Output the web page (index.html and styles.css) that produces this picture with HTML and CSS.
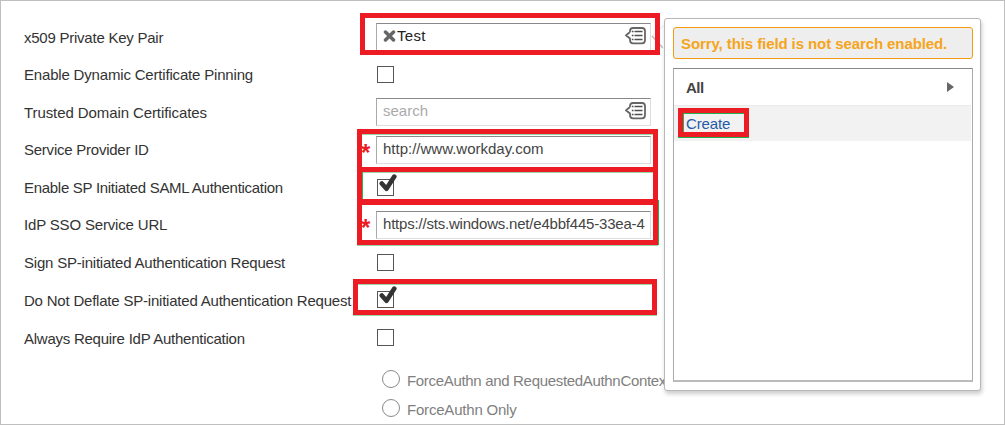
FILE: index.html
```
<!DOCTYPE html>
<html lang="en">
<head>
<meta charset="utf-8">
<title>SAML Setup</title>
<link rel="stylesheet" href="styles.css">
</head>
<body>
<svg class="defs" width="0" height="0">
  <symbol id="prompt" viewBox="0 0 21 18">
    <path d="M5 5V4Q5 1 8 1H17Q20 1 20 4V13Q20 16.300 17 16.300H8Q5 16.300 5 13V11.500L1 8.300L5 5" fill="#fff" stroke="#666" stroke-width="1.800"/>
    <path d="M9.500 4.500H17.500M9.500 8.500H17.500M9.500 12.500H17.500" stroke="#505050" stroke-width="1.500"/>
    <path d="M6.800 4.500H8.500M6.800 8.500H8.500M6.800 12.500H8.500" stroke="#505050" stroke-width="1.500"/>
  </symbol>
  <symbol id="check" viewBox="0 0 18 18">
    <path d="M2.800 9.500L7.500 14.800L15.300 2.600" fill="none" stroke="#333" stroke-width="4.600" stroke-linecap="round" stroke-linejoin="round"/>
  </symbol>
</svg>
<main class="page">
  <div class="form">
    <div class="row"><span class="label low l1">x509 Private Key Pair</span><div class="field"><svg class="remove" viewBox="0 0 13 12"><path d="M2.500 2L10.500 10M10.500 2L2.500 10" stroke="#666" stroke-width="3.500" stroke-linecap="round"/></svg><span class="value dark v1">Test</span><svg class="prompt"><use href="#prompt"/></svg></div></div>
    <div class="row"><span class="label l2">Enable Dynamic Certificate Pinning</span><span class="checkbox"></span></div>
    <div class="row"><span class="label low l3">Trusted Domain Certificates</span><div class="field"><span class="value hint">search</span><svg class="prompt"><use href="#prompt"/></svg></div></div>
    <div class="row"><span class="label l4">Service Provider ID</span><div class="field"><span class="star">*</span><span class="value">http://www.workday.com</span></div></div>
    <div class="row"><span class="label l5">Enable SP Initiated SAML Authentication</span><span class="checkbox"><svg class="check"><use href="#check"/></svg></span></div>
    <div class="row"><span class="label l6">IdP SSO Service URL</span><div class="field"><span class="star">*</span><span class="value v4">https://sts.windows.net/e4bbf445-33ea-4</span></div></div>
    <div class="row"><span class="label l7">Sign SP-initiated Authentication Request</span><span class="checkbox"></span></div>
    <div class="row"><span class="label low l8">Do Not Deflate SP-initiated Authentication Request</span><span class="checkbox"><svg class="check"><use href="#check"/></svg></span></div>
    <div class="row"><span class="label low l9">Always Require IdP Authentication</span><span class="checkbox"></span></div>
    <div class="choices">
      <div class="choice"><span class="radio"></span><span class="caption long">ForceAuthn and RequestedAuthnContext</span></div>
      <div class="choice"><span class="radio"></span><span class="caption">ForceAuthn Only</span></div>
    </div>
  </div>

  <svg class="pointer" viewBox="0 0 12 26"><path d="M12 1L1 11" stroke="#ddd" stroke-dasharray="2 1"/><path d="M1 11L12 23" stroke="#bbb" stroke-width="1.500"/></svg>
  <aside class="popup">
    <div class="alert">Sorry, this field is not search enabled.</div>
    <div class="list">
      <div class="item all"><span>All</span><span class="arrow"></span></div>
      <div class="item create"><span>Create</span></div>
    </div>
  </aside>

  <div class="mark mark-key"></div>
  <div class="mark mark-provider green"></div>
  <div class="mark mark-saml"></div>
  <div class="mark mark-url"></div>
  <div class="mark mark-deflate green"></div>
  <div class="mark mark-create"></div>
</main>
</body>
</html>
```
FILE: styles.css
```
* { box-sizing: border-box; }
body { margin: 0; font-family: "Liberation Sans", Arial, sans-serif; font-size: 15px; color: #333; }
.defs { display: block; position: absolute; }
.page { position: relative; width: 1005px; height: 425px; overflow: hidden; background: #fff; border: 1px solid #bfbfbf; }
.form { padding: 17px 0 0 23px; }
.row { display: grid; grid-template-columns: 352px 275px; align-items: center; height: 37.6px; white-space: nowrap; }
.label { line-height: 18px; padding-top: 1px; justify-self: start; }
.low { padding-top: 3px; }
.l1 { letter-spacing: -.24px; }
.l2 { letter-spacing: -.18px; }
.l3 { letter-spacing: -.09px; }
.l4 { letter-spacing: -.24px; }
.l5 { letter-spacing: -.29px; }
.l6 { letter-spacing: -.17px; }
.l7 { letter-spacing: -.21px; }
.l8 { letter-spacing: -.21px; }
.l9 { letter-spacing: -.25px; }
.field { position: relative; display: flex; align-items: center; height: 28px; padding: 0 4px 2px 6px; border: 1px solid #aaa; border-top: 1px solid #888; border-right-color: #ddd; border-bottom-color: #ddd; background: #fff; }
.value { color: #444; flex: 1; line-height: 18px; }
.value.dark { color: #222; }
.value.hint { color: #aaa; }
.v1 { letter-spacing: .3px; }
.v4 { letter-spacing: -.2px; }
.remove { width: 13px; height: 12px; margin-right: 1px; }
.prompt { width: 21px; height: 18px; margin-top: 1px; }
.star { position: absolute; left: -16px; top: 2px; font-size: 24px; line-height: 28px; font-weight: bold; color: #ed1c24; z-index: 5; }
.checkbox { position: relative; width: 17px; height: 17px; margin-left: 1px; border: 1px solid #555; background: #fff; }
.check { position: absolute; left: 1px; top: -6px; width: 18px; height: 18px; }
.choices { padding: 8px 0 0 358px; color: #808080; }
.choice { display: flex; align-items: center; gap: 7px; height: 29px; white-space: nowrap; letter-spacing: -.2px; }
.caption { padding-top: 3px; }
.long { letter-spacing: -.32px; }
.radio { width: 18px; height: 18px; border: 1px solid #8a8a8a; border-radius: 50%; }
.pointer { position: absolute; left: 650px; top: 24px; width: 12px; height: 26px; }
.popup { position: absolute; left: 663px; top: 17px; width: 317px; height: 373px; padding: 8px 7px 8px 8px; border: 1px solid #b8b8b8; border-radius: 3px; background: #fff; box-shadow: 1px 3px 4px rgba(0,0,0,.2); }
.alert { height: 32px; padding-left: 7px; line-height: 31px; border: 1px solid #f39c12; border-radius: 3px; background: #eee; color: #f5a51b; font-weight: bold; white-space: nowrap; letter-spacing: -.09px; }
.list { height: 314px; margin-top: 9px; border: 1px solid #aaa; border-top-color: #888; border-bottom: 2px solid #bbb; padding-right: 1px; }
.item { display: flex; align-items: center; height: 36px; padding-left: 12px; }
.all { justify-content: space-between; padding-right: 17px; color: #444; font-weight: bold; letter-spacing: -.5px; }
.arrow { border: 5px solid transparent; border-left: 7px solid #666; border-right: 0; }
.create { background: #f2f2f2; color: #1f5ba8; border-top: 1px solid #eaeaea; padding-bottom: 1px; letter-spacing: -.15px; }
.mark { position: absolute; border: 5px solid #ed1c24; }
.green { box-shadow: inset 0 1px #9bd6a5, 0 1px #9bd6a5; }
.mark-key { left: 359px; top: 12px; width: 300px; height: 42px; }
.mark-provider { left: 356px; top: 128px; width: 301px; height: 43px; }
.mark-saml { left: 356px; top: 166px; width: 301px; height: 38px; border-bottom-width: 6px; box-shadow: inset 1px 0 #2cb34a, inset 0 1px #9bd6a5; }
.mark-url { left: 356px; top: 199px; width: 301px; height: 45px; box-shadow: 1px 0 #22b14c, 0 1px #9bd6a5; }
.mark-deflate { left: 352px; top: 278px; width: 304px; height: 36px; }
.mark-create { left: 677px; top: 107px; width: 71px; height: 29px; box-shadow: inset 1px 1px #22b14c, 0 1px #22b14c; }
```
